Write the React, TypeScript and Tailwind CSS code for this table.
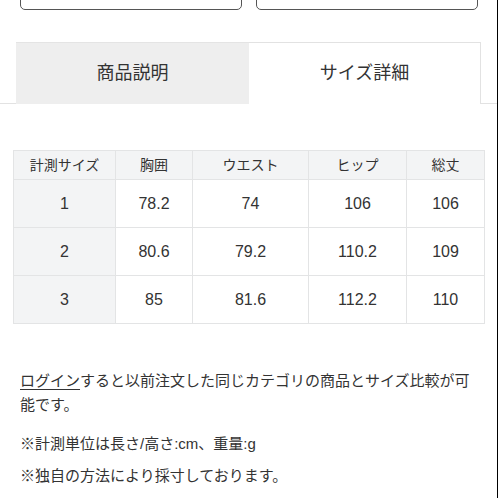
import React from "react";

const rows = [
  ["1", "78.2", "74", "106", "106"],
  ["2", "80.6", "79.2", "110.2", "109"],
  ["3", "85", "81.6", "112.2", "110"],
];
const heads = ["計測サイズ", "胸囲", "ウエスト", "ヒップ", "総丈"];
const widths = ["w-[102px]", "w-[77px]", "w-[116px]", "w-[98px]", "w-[78px]"];

export default function App() {
  return (
    <div
      className="w-[498px] h-[498px] overflow-hidden bg-white border-r border-black text-[#333]"
      style={{ fontFamily: '"Liberation Sans", "Noto Sans CJK JP", sans-serif' }}
    >
      <div className="flex gap-[14px] pl-[20px] pr-[19px] -mt-[36px]">
        <div className="w-[222px] h-[46px] border-[1.5px] border-[#555] rounded-[5px]" />
        <div className="w-[222px] h-[46px] border-[1.5px] border-[#555] rounded-[5px]" />
      </div>

      <div className="mt-[32px] flex pl-[16px] border-b border-[#e2e2e2] h-[62px]">
        <div className="w-[233px] h-[62px] bg-[#eeeeee] border-t border-[#e4e4e4] flex items-center justify-center text-[18px] text-[#333]">
          商品説明
        </div>
        <div className="w-[232px] h-[62px] bg-white border-t border-r border-[#e2e2e2] -mb-px flex items-center justify-center text-[18px] text-[#333]">
          サイズ詳細
        </div>
      </div>

      <div className="mt-[46px] pl-[13px]">
        <table className="border-collapse w-[471px] table-fixed">
          <thead>
            <tr className="h-[29px]">
              {heads.map((h, i) => (
                <th
                  key={i}
                  className={`${widths[i]} bg-[#f3f4f5] border border-[#e3e4e5] font-normal text-[14px] text-[#333] p-0`}
                >
                  {h}
                </th>
              ))}
            </tr>
          </thead>
          <tbody>
            {rows.map((r, ri) => (
              <tr key={ri} className="h-[48px]">
                {r.map((c, ci) => (
                  <td
                    key={ci}
                    className={`${ci === 0 ? "bg-[#f3f4f5]" : "bg-white"} border border-[#e3e4e5] text-center text-[16px] text-[#333] p-0`}
                  >
                    {c}
                  </td>
                ))}
              </tr>
            ))}
          </tbody>
        </table>
      </div>

      <div className="mt-[45px] pl-[20px] pr-[24px] text-[15px] text-[#333]">
        <p className="leading-[24px]">
          <span className="underline underline-offset-[3px]">ログイン</span>
          <span>すると以前注文した同じカテゴリの商品とサイズ比較が可能です。</span>
        </p>
        <p className="mt-[15px] leading-[24px]">※計測単位は長さ/高さ:cm、重量:g</p>
        <p className="mt-[8px] leading-[24px]">※独自の方法により採寸しております。</p>
      </div>
    </div>
  );
}
